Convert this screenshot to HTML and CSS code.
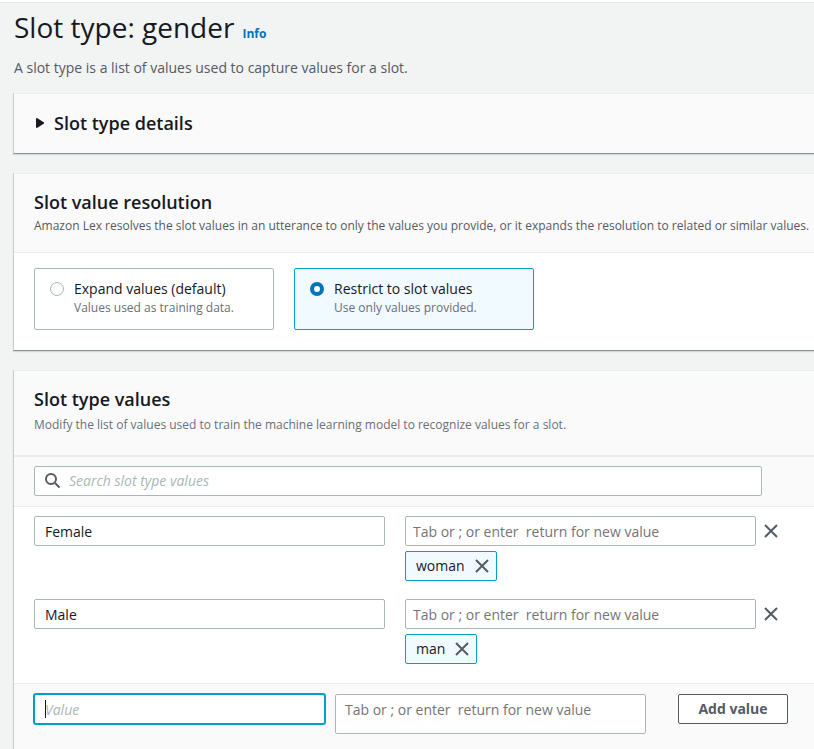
FILE: index.html
```html
<!DOCTYPE html>
<html lang="en">
<head>
<meta charset="utf-8">
<title>Slot type: gender</title>
<link rel="stylesheet" href="styles.css">
</head>
<body>
<svg class="sprite" aria-hidden="true">
  <symbol id="close" viewBox="0 0 14 14"><path d="M1 1l12 12M13 1L1 13" fill="none" stroke="currentColor" stroke-width="2"/></symbol>
</svg>
<main class="page">
  <header class="page-header">
    <h1>Slot type: gender</h1>
    <a class="info" href="#">Info</a>
  </header>
  <p class="page-description">A slot type is a list of values used to capture values for a slot.</p>

  <section class="panel">
    <button class="expander" type="button" aria-expanded="false">
      <svg class="caret" viewBox="0 0 8 10" aria-hidden="true"><path d="M0 0.500L1 0l7 4.500v1L1 10 0 9.500z" fill="currentColor"/></svg>
      <span>Slot type details</span>
    </button>
  </section>

  <section class="panel">
    <div class="panel-header">
      <h2>Slot value resolution</h2>
      <p>Amazon Lex resolves the slot values in an utterance to only the values you provide, or it expands the resolution to related or similar values.</p>
    </div>
    <div class="tiles">
      <label class="tile">
        <input type="radio" name="resolution">
        <span class="tile-text"><span class="tile-label">Expand values (default)</span><span class="tile-hint">Values used as training data.</span></span>
      </label>
      <label class="tile tile-selected">
        <input type="radio" name="resolution" checked>
        <span class="tile-text"><span class="tile-label">Restrict to slot values</span><span class="tile-hint">Use only values provided.</span></span>
      </label>
    </div>
  </section>

  <section class="panel">
    <div class="panel-header values-header">
      <h2>Slot type values</h2>
      <p>Modify the list of values used to train the machine learning model to recognize values for a slot.</p>
    </div>
    <div class="search">
      <label class="search-box">
        <svg class="search-icon" viewBox="0 0 16 16" aria-hidden="true"><path d="M10 10l4.500 4.500" fill="none" stroke="currentColor" stroke-width="2"/><circle cx="6" cy="6" r="5" fill="none" stroke="currentColor" stroke-width="2"/></svg>
        <input type="search" placeholder="Search slot type values" aria-label="Search slot type values">
      </label>
    </div>
    <div class="rows">
      <div class="row">
        <input class="field" type="text" value="Female" aria-label="Value">
        <div class="synonyms">
          <input class="field synonym-field" type="text" placeholder="Tab or ; or enter  return for new value" aria-label="Synonyms for Female">
          <span class="chip">woman<button class="icon-button" type="button" aria-label="Remove woman"><svg><use href="#close"/></svg></button></span>
        </div>
        <button class="icon-button row-remove" type="button" aria-label="Remove Female"><svg><use href="#close"/></svg></button>
      </div>
      <div class="row">
        <input class="field" type="text" value="Male" aria-label="Value">
        <div class="synonyms">
          <input class="field synonym-field" type="text" placeholder="Tab or ; or enter  return for new value" aria-label="Synonyms for Male">
          <span class="chip">man<button class="icon-button" type="button" aria-label="Remove man"><svg><use href="#close"/></svg></button></span>
        </div>
        <button class="icon-button row-remove" type="button" aria-label="Remove Male"><svg><use href="#close"/></svg></button>
      </div>
    </div>
    <div class="add-row">
      <input class="field new-value" type="text" placeholder="Value" aria-label="New value" autofocus>
      <textarea class="field new-synonyms" placeholder="Tab or ; or enter  return for new value" aria-label="New synonyms"></textarea>
      <button class="add-button" type="button">Add value</button>
    </div>
  </section>
</main>
</body>
</html>
```
FILE: styles.css
```css
* { box-sizing: border-box; }

body {
  margin: 0;
  background: #f2f3f3;
  color: #16191f;
  font: 14px/20px "Open Sans", "Noto Sans", sans-serif;
  border-top: 2px solid #fff;
  overflow: hidden;
}

h1, h2, p { margin: 0; }
input, textarea, button { font: inherit; color: inherit; }

.sprite { display: none; }

.page {
  border-top: 1px solid #e6e9e9;
  padding-left: 13px;
}

.page-header {
  display: flex;
  align-items: baseline;
  gap: 8px;
  padding: 6px 1px 0;
}

h1 { font-size: 28px; line-height: 36px; font-weight: 400; }

.info {
  color: #0073bb;
  font-size: 12px;
  font-weight: 700;
  text-decoration: none;
}

.page-description { color: #545b64; margin: 13px 1px 15px; }

.panel {
  margin-bottom: 19px;
  background: #fff;
  border-left: 1px solid #c6cccc;
  border-top: 1px solid #eaeded;
  border-bottom: 1px solid #879196;
  box-shadow: 0 1px 1px #d5dbdb;
}

.expander {
  display: flex;
  align-items: center;
  gap: 10px;
  width: 100%;
  padding: 17px 22px 18px;
  border: 0;
  background: #fafafa;
  font-size: 18px;
  line-height: 24px;
  font-weight: 600;
}

.caret { width: 8px; height: 10px; }

.panel-header {
  padding: 16px 20px;
  background: #fafafa;
  border-bottom: 1px solid #eaeded;
}

h2 { font-size: 18px; line-height: 24px; font-weight: 600; }

.panel-header p {
  margin-top: 2px;
  color: #545b64;
  font-size: 12px;
  line-height: 20px;
  white-space: nowrap;
}

.values-header { padding-bottom: 20px; border-bottom-width: 2px; }
.values-header p { margin-top: 4px; color: #687078; }

.tiles { display: flex; gap: 20px; padding: 15px 20px 20px; }

.tile {
  display: flex;
  gap: 10px;
  width: 240px;
  padding: 10px 15px 13px;
  border: 1px solid #aab7b8;
  border-radius: 2px;
}

.tile-selected { background: #f1faff; border-color: #00a1c9; }

.tile input {
  appearance: none;
  flex: none;
  width: 14px;
  height: 14px;
  margin: 3px 0 0;
  border: 1px solid #aab7b8;
  border-radius: 50%;
  background: #fff;
}

.tile input:checked { border: 4px solid #0073bb; }

.tile-text { display: flex; flex-direction: column; white-space: nowrap; }
.tile-hint { color: #687078; font-size: 12px; line-height: 17px; }

.search {
  padding: 9px 52px 10px 20px;
  background: #fafafa;
  border-bottom: 1px solid #eaeded;
}

.search-box {
  display: flex;
  align-items: center;
  gap: 8px;
  height: 30px;
  padding: 0 10px;
  background: #fff;
  border: 1px solid #aab7b8;
  border-radius: 2px;
}

.search-icon { width: 16px; height: 16px; color: #545b64; }

.search-box input {
  flex: 1;
  min-width: 0;
  padding: 0;
  border: 0;
  outline: 0;
  background: none;
}

.search-box input::placeholder,
.new-value::placeholder { color: #aab7b8; font-style: italic; }

.rows { border-bottom: 1px solid #eaeded; padding-bottom: 1px; }

.row {
  display: grid;
  grid-template-columns: calc(50% - 21px) 1fr 14px;
  align-items: start;
  padding: 9px 36px 9px 20px;
}

.row + .row { padding-bottom: 18px; }

.field {
  display: block;
  width: 100%;
  height: 30px;
  padding: 4px 10px;
  background: #fff;
  border: 1px solid #aab7b8;
  border-radius: 2px;
  outline: 0;
}

.synonyms { padding: 0 8px 0 20px; }
.synonym-field { padding: 4px 7px; }
.synonym-field::placeholder,
.new-synonyms::placeholder { color: #757575; white-space: pre; }

.chip {
  display: inline-flex;
  align-items: center;
  gap: 10px;
  height: 30px;
  margin-top: 5px;
  padding: 0 7px 0 10px;
  background: #f1faff;
  border: 1px solid #00a1c9;
  border-radius: 2px;
  vertical-align: top;
}

.icon-button {
  padding: 0;
  border: 0;
  background: none;
  color: #545b64;
}

.icon-button svg { display: block; width: 14px; height: 14px; }
.row-remove { padding-top: 8px; }

.add-row {
  display: flex;
  align-items: flex-start;
  padding: 10px 26px 15px 20px;
  background: #fafafa;
}

.new-value {
  flex: 1 1 291px;
  min-width: 0;
  border-color: #00a1c9;
  box-shadow: 0 0 0 1px #00a1c9;
}

/* Steady insertion mark while the box is empty */
.new-value:placeholder-shown {
  caret-color: transparent;
  background: #fff linear-gradient(#16191f, #16191f) 10px center / 1px 18px no-repeat;
}

.new-synonyms {
  flex: 1 1 311px;
  min-width: 0;
  height: 40px;
  margin: 0 32px 0 10px;
  padding: 5px 9px;
  resize: none;
}

.add-button {
  flex: none;
  width: 110px;
  height: 30px;
  padding: 0;
  border: 1px solid #545b64;
  border-radius: 2px;
  background: #fff;
  color: #545b64;
  font-weight: 700;
}
```
